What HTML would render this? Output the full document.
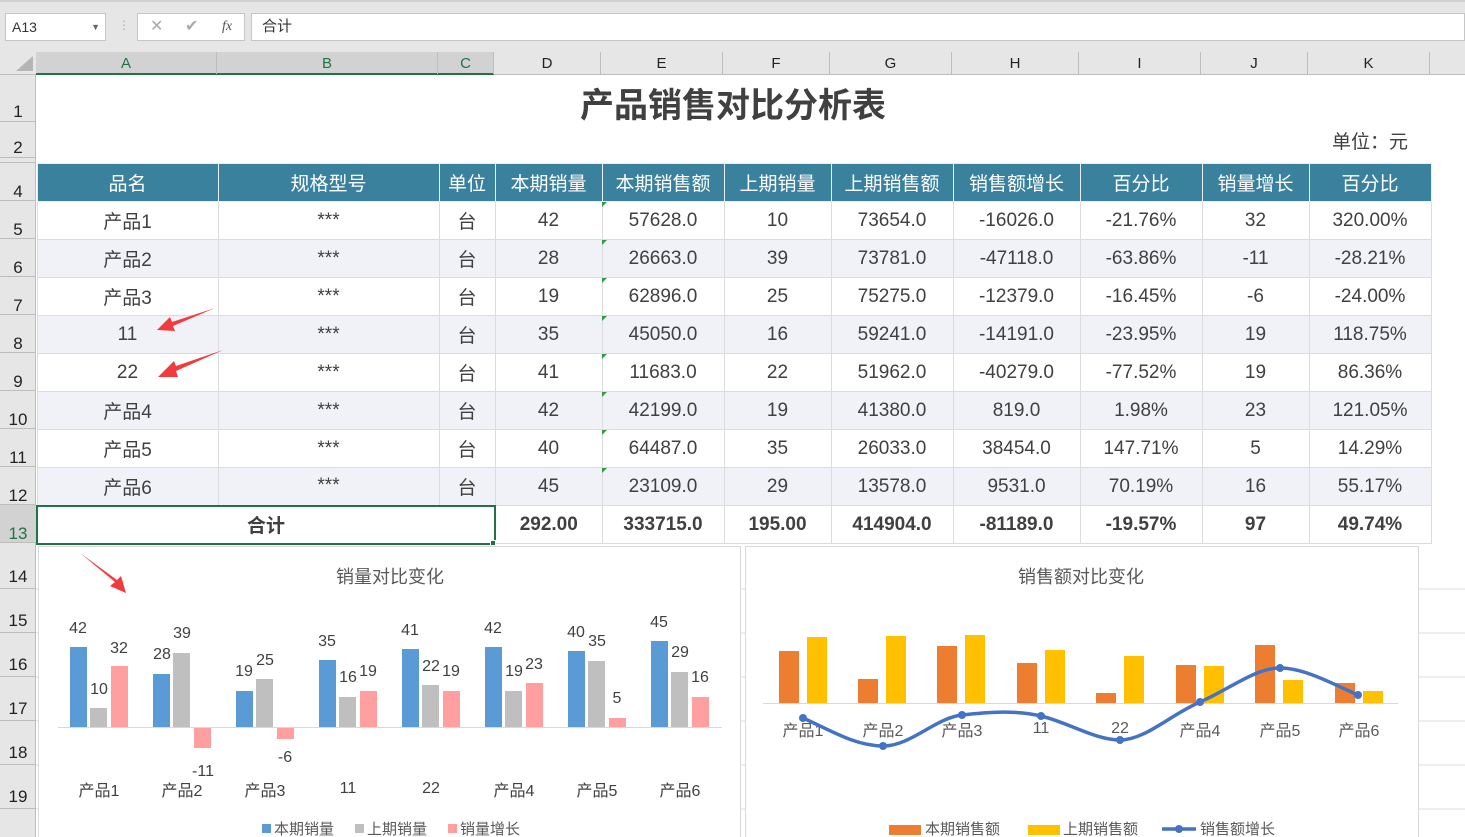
<!DOCTYPE html>
<html><head><meta charset="utf-8"><style>
*{margin:0;padding:0;box-sizing:border-box}
body{width:1465px;height:837px;overflow:hidden;background:#fff;font-family:"Liberation Sans","Noto Sans CJK SC",sans-serif;position:relative;color:#404040}
.a{position:absolute}
table{position:absolute;left:36px;top:163px;border-collapse:collapse;table-layout:fixed}
td{border:1px solid #dcdcdc;text-align:center;font-size:19px;height:38px;padding:0;white-space:nowrap;color:#404040}
tr.h td{background:#3a819d;color:#fff;border-color:#e8eef2}
tr.g td{background:#f1f2f7}
tr.t td{font-weight:bold}
.ch{position:absolute;top:52px;height:22px;border-right:1px solid #bdbdbd;text-align:center;font-size:15px;line-height:24px;color:#222}
.rh{position:absolute;left:0;width:36px;border-bottom:1px solid #bdbdbd;text-align:center;font-size:17px;color:#222}
</style></head><body>
<div class="a" style="left:0;top:0;width:1465px;height:52px;background:#e6e6e6;border-top:2px solid #d0d0d0"></div>
<div class="a" style="left:5px;top:13px;width:101px;height:28px;background:#fff;border:1px solid #c6c6c6;font-size:14px;line-height:26px;padding-left:6px;color:#333">A13<span style="position:absolute;right:5px;top:0;font-size:9px;color:#666">▼</span></div>
<div class="a" style="left:118px;top:18px;color:#aaa;font-size:12px">⋮</div>
<div class="a" style="left:137px;top:13px;width:108px;height:28px;background:#fff;border:1px solid #c6c6c6;font-size:16px;line-height:26px;color:#aaa"><span class="a" style="left:12px">✕</span><span class="a" style="left:47px">✔</span><span class="a" style="left:84px;color:#555;font-style:italic;font-family:'Liberation Serif';font-size:14px">fx</span></div>
<div class="a" style="left:251px;top:13px;width:1214px;height:28px;background:#fff;border:1px solid #c6c6c6;font-size:15px;line-height:26px;padding-left:10px;color:#333">合计</div>
<!-- column headers -->
<div class="a" style="left:0;top:52px;width:1465px;height:23px;background:#e6e6e6;border-bottom:1px solid #bdbdbd"></div>
<div class="a" style="left:36px;top:52px;width:458px;height:23px;background:#d2d2d2;border-bottom:2px solid #217346"></div>
<div class="a" style="left:16px;top:56px;width:0;height:0;border-left:17px solid transparent;border-bottom:15px solid #b5b5b5"></div>
<div class="ch" style="left:36px;width:181px;color:#217346">A</div>
<div class="ch" style="left:217px;width:221px;color:#217346">B</div>
<div class="ch" style="left:438px;width:56px;color:#217346">C</div>
<div class="ch" style="left:494px;width:107px">D</div>
<div class="ch" style="left:601px;width:122px">E</div>
<div class="ch" style="left:723px;width:107px">F</div>
<div class="ch" style="left:830px;width:122px">G</div>
<div class="ch" style="left:952px;width:127px">H</div>
<div class="ch" style="left:1079px;width:122px">I</div>
<div class="ch" style="left:1201px;width:107px">J</div>
<div class="ch" style="left:1308px;width:122px">K</div>
<!-- row headers -->
<div class="a" style="left:0;top:75px;width:36px;height:762px;background:#e6e6e6;border-right:1px solid #bdbdbd"></div>
<div class="rh" style="top:75px;height:47px;line-height:74px">1</div>
<div class="rh" style="top:122px;height:36px;line-height:52px">2</div>
<div class="rh" style="top:158px;height:5px"></div>
<div class="rh" style="top:163px;height:38px;line-height:58px">4</div>
<div class="rh" style="top:201px;height:38px;line-height:58px">5</div>
<div class="rh" style="top:239px;height:38px;line-height:58px">6</div>
<div class="rh" style="top:277px;height:38px;line-height:58px">7</div>
<div class="rh" style="top:315px;height:38px;line-height:58px">8</div>
<div class="rh" style="top:353px;height:38px;line-height:58px">9</div>
<div class="rh" style="top:391px;height:38px;line-height:58px">10</div>
<div class="rh" style="top:429px;height:38px;line-height:58px">11</div>
<div class="rh" style="top:467px;height:38px;line-height:58px">12</div>
<div class="rh" style="top:505px;height:38px;line-height:58px;background:#d2d2d2;color:#217346">13</div>
<div class="rh" style="top:543px;height:46px;line-height:68px">14</div>
<div class="rh" style="top:589px;height:44px;line-height:64px">15</div>
<div class="rh" style="top:633px;height:44px;line-height:64px">16</div>
<div class="rh" style="top:677px;height:44px;line-height:64px">17</div>
<div class="rh" style="top:721px;height:44px;line-height:64px">18</div>
<div class="rh" style="top:765px;height:44px;line-height:64px">19</div>
<div class="a" style="left:0;top:60px;width:1465px;text-align:center;"></div>
<div class="a" style="left:494px;top:78px;width:478px;text-align:center;font-size:34px;font-weight:bold;color:#404040">产品销售对比分析表</div>
<div class="a" style="left:1332px;top:127px;font-size:19px">单位：元</div>
<table>
<colgroup><col style="width:181px"><col style="width:221px"><col style="width:56px"><col style="width:107px"><col style="width:122px"><col style="width:107px"><col style="width:122px"><col style="width:127px"><col style="width:122px"><col style="width:107px"><col style="width:122px"></colgroup>
<tr class="h"><td>品名</td><td>规格型号</td><td>单位</td><td>本期销量</td><td>本期销售额</td><td>上期销量</td><td>上期销售额</td><td>销售额增长</td><td>百分比</td><td>销量增长</td><td>百分比</td></tr>
<tr><td>产品1</td><td>***</td><td>台</td><td>42</td><td>57628.0</td><td>10</td><td>73654.0</td><td>-16026.0</td><td>-21.76%</td><td>32</td><td>320.00%</td></tr>
<tr class="g"><td>产品2</td><td>***</td><td>台</td><td>28</td><td>26663.0</td><td>39</td><td>73781.0</td><td>-47118.0</td><td>-63.86%</td><td>-11</td><td>-28.21%</td></tr>
<tr><td>产品3</td><td>***</td><td>台</td><td>19</td><td>62896.0</td><td>25</td><td>75275.0</td><td>-12379.0</td><td>-16.45%</td><td>-6</td><td>-24.00%</td></tr>
<tr class="g"><td>11</td><td>***</td><td>台</td><td>35</td><td>45050.0</td><td>16</td><td>59241.0</td><td>-14191.0</td><td>-23.95%</td><td>19</td><td>118.75%</td></tr>
<tr><td>22</td><td>***</td><td>台</td><td>41</td><td>11683.0</td><td>22</td><td>51962.0</td><td>-40279.0</td><td>-77.52%</td><td>19</td><td>86.36%</td></tr>
<tr class="g"><td>产品4</td><td>***</td><td>台</td><td>42</td><td>42199.0</td><td>19</td><td>41380.0</td><td>819.0</td><td>1.98%</td><td>23</td><td>121.05%</td></tr>
<tr><td>产品5</td><td>***</td><td>台</td><td>40</td><td>64487.0</td><td>35</td><td>26033.0</td><td>38454.0</td><td>147.71%</td><td>5</td><td>14.29%</td></tr>
<tr class="g"><td>产品6</td><td>***</td><td>台</td><td>45</td><td>23109.0</td><td>29</td><td>13578.0</td><td>9531.0</td><td>70.19%</td><td>16</td><td>55.17%</td></tr>
<tr class="t"><td colspan="3" style="border:2px solid #217346">合计</td><td>292.00</td><td>333715.0</td><td>195.00</td><td>414904.0</td><td>-81189.0</td><td>-19.57%</td><td>97</td><td>49.74%</td></tr>
</table>
<div class="a" style="left:490px;top:540px;width:6px;height:6px;background:#217346;border:1px solid #fff"></div>
<svg class="a" style="left:0;top:0" width="1465" height="837">
<g fill="#2e9e3e"><polygon points="602,202 607,202 602,207"/><polygon points="602,240 607,240 602,245"/><polygon points="602,278 607,278 602,283"/><polygon points="602,316 607,316 602,321"/><polygon points="602,354 607,354 602,359"/><polygon points="602,392 607,392 602,397"/><polygon points="602,430 607,430 602,435"/><polygon points="602,468 607,468 602,473"/></g>
<!-- grid below -->
<g stroke="#dcdcdc"><line x1="36" y1="589" x2="1465" y2="589"/><line x1="36" y1="633" x2="1465" y2="633"/><line x1="36" y1="677" x2="1465" y2="677"/><line x1="36" y1="721" x2="1465" y2="721"/><line x1="36" y1="765" x2="1465" y2="765"/><line x1="36" y1="809" x2="1465" y2="809"/></g>
<!-- left chart -->
<rect x="38.5" y="546.5" width="702" height="300" fill="#fff" stroke="#d9d9d9"/>
<text x="390" y="583" text-anchor="middle" font-size="18" fill="#595959">销量对比变化</text>
<line x1="58" y1="727.5" x2="722" y2="727.5" stroke="#d9d9d9"/>
<g fill="#5b9bd5"><rect x="70" y="647" width="17" height="80"/><rect x="153" y="674" width="17" height="53"/><rect x="236" y="691" width="17" height="36"/><rect x="319" y="660" width="17" height="67"/><rect x="402" y="649" width="17" height="78"/><rect x="485" y="647" width="17" height="80"/><rect x="568" y="651" width="17" height="76"/><rect x="651" y="641" width="17" height="86"/></g>
<g fill="#bfbfbf"><rect x="90" y="708" width="17" height="19"/><rect x="173" y="653" width="17" height="74"/><rect x="256" y="679" width="17" height="48"/><rect x="339" y="697" width="17" height="30"/><rect x="422" y="685" width="17" height="42"/><rect x="505" y="691" width="17" height="36"/><rect x="588" y="661" width="17" height="66"/><rect x="671" y="672" width="17" height="55"/></g>
<g fill="#ff9f9f"><rect x="111" y="666" width="17" height="61"/><rect x="194" y="728" width="17" height="20"/><rect x="277" y="728" width="17" height="11"/><rect x="360" y="691" width="17" height="36"/><rect x="443" y="691" width="17" height="36"/><rect x="526" y="683" width="17" height="44"/><rect x="609" y="718" width="17" height="9"/><rect x="692" y="697" width="17" height="30"/></g>
<g font-size="16" fill="#404040" text-anchor="middle">
<text x="78" y="633">42</text><text x="99" y="694">10</text><text x="119" y="653">32</text>
<text x="162" y="659">28</text><text x="182" y="638">39</text><text x="203" y="776">-11</text>
<text x="244" y="676">19</text><text x="265" y="665">25</text><text x="285" y="762">-6</text>
<text x="327" y="646">35</text><text x="348" y="682">16</text><text x="368" y="676">19</text>
<text x="410" y="635">41</text><text x="431" y="671">22</text><text x="451" y="676">19</text>
<text x="493" y="633">42</text><text x="514" y="676">19</text><text x="534" y="669">23</text>
<text x="576" y="637">40</text><text x="597" y="646">35</text><text x="617" y="703">5</text>
<text x="659" y="627">45</text><text x="680" y="657">29</text><text x="700" y="682">16</text>
<text x="99" y="796">产品1</text><text x="182" y="796">产品2</text><text x="265" y="796">产品3</text><text x="348" y="793">11</text><text x="431" y="793">22</text><text x="514" y="796">产品4</text><text x="597" y="796">产品5</text><text x="680" y="796">产品6</text>
</g>
<g font-size="15" fill="#595959"><rect x="262" y="824" width="9" height="9" fill="#5b9bd5"/><text x="274" y="834">本期销量</text><rect x="355" y="824" width="9" height="9" fill="#bfbfbf"/><text x="367" y="834">上期销量</text><rect x="448" y="824" width="9" height="9" fill="#ff9f9f"/><text x="460" y="834">销量增长</text></g>
<!-- right chart -->
<rect x="745.5" y="546.5" width="673" height="300" fill="#fff" stroke="#d9d9d9"/>
<text x="1081" y="583" text-anchor="middle" font-size="18" fill="#595959">销售额对比变化</text>
<line x1="763" y1="703.5" x2="1398" y2="703.5" stroke="#d9d9d9"/>
<g fill="#ed7d31"><rect x="779" y="651" width="20" height="52"/><rect x="858" y="679" width="20" height="24"/><rect x="937" y="646" width="20" height="57"/><rect x="1017" y="663" width="20" height="40"/><rect x="1096" y="693" width="20" height="10"/><rect x="1176" y="665" width="20" height="38"/><rect x="1255" y="645" width="20" height="58"/><rect x="1335" y="683" width="20" height="20"/></g>
<g fill="#ffc000"><rect x="807" y="637" width="20" height="66"/><rect x="886" y="636" width="20" height="67"/><rect x="965" y="635" width="20" height="68"/><rect x="1045" y="650" width="20" height="53"/><rect x="1124" y="656" width="20" height="47"/><rect x="1204" y="666" width="20" height="37"/><rect x="1283" y="680" width="20" height="23"/><rect x="1363" y="691" width="20" height="12"/></g>
<g font-size="16" fill="#595959" text-anchor="middle"><text x="803" y="736">产品1</text><text x="883" y="736">产品2</text><text x="962" y="736">产品3</text><text x="1041" y="733">11</text><text x="1120" y="733">22</text><text x="1200" y="736">产品4</text><text x="1280" y="736">产品5</text><text x="1359" y="736">产品6</text></g>
<path d="M803 718 C830 730 855 746 883 746 S935 718 962 715 S1015 710 1041 716 S1095 740 1120 740 S1170 715 1200 702 S1255 668 1280 668 S1335 685 1358 695" fill="none" stroke="#4472c4" stroke-width="3.5"/>
<g fill="#4472c4"><circle cx="803" cy="718" r="4"/><circle cx="883" cy="746" r="4"/><circle cx="962" cy="715" r="4"/><circle cx="1041" cy="716" r="4"/><circle cx="1120" cy="740" r="4"/><circle cx="1200" cy="702" r="4"/><circle cx="1280" cy="668" r="4"/><circle cx="1358" cy="695" r="4"/></g>
<g font-size="15" fill="#595959"><rect x="889" y="825" width="32" height="10" fill="#ed7d31"/><text x="925" y="834">本期销售额</text><rect x="1028" y="825" width="32" height="10" fill="#ffc000"/><text x="1063" y="834">上期销售额</text><line x1="1162" y1="829" x2="1196" y2="829" stroke="#4472c4" stroke-width="3.5"/><circle cx="1179" cy="829" r="4" fill="#4472c4"/><text x="1200" y="834">销售额增长</text></g>
<!-- arrows -->
<g fill="#f03c3c"><polygon points="215,308 172,322 170,317 157,330 175,331 173,326"/><polygon points="223,350 176,366 174,361 158,377 178,377 176,371"/><polygon points="80,553 115,582 110,586 126,593 121,576 117,580"/></g>
</svg>
</body></html>
